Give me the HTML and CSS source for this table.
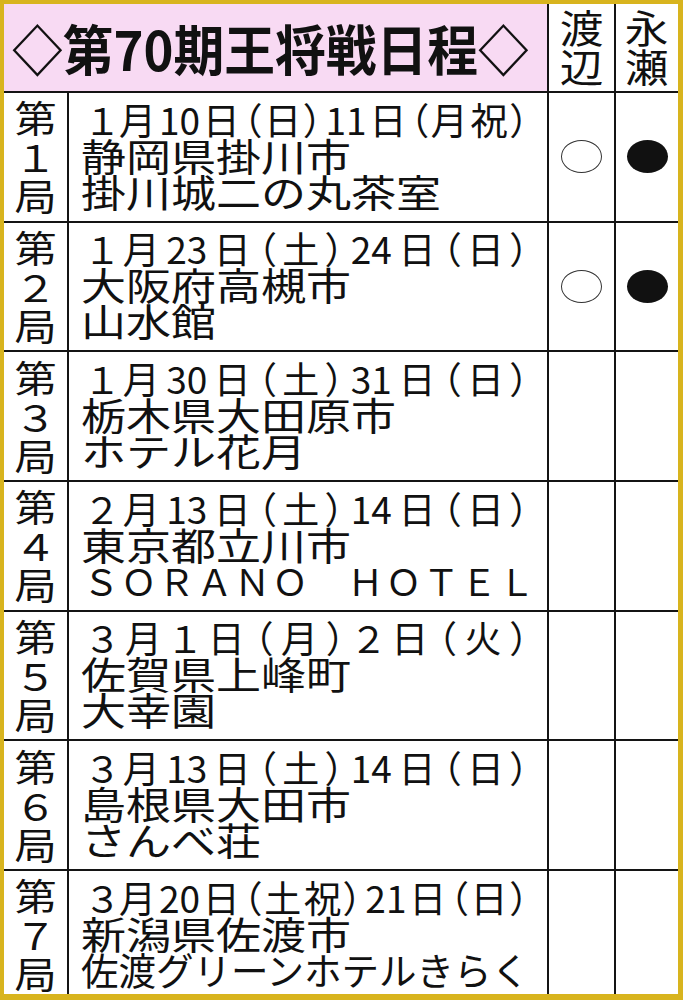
FILE: index.html
```html
<!DOCTYPE html>
<html lang="ja">
<head>
<meta charset="utf-8">
<title>第70期王将戦日程</title>
<link rel="stylesheet" href="styles.css">
</head>
<body>
<div class="frame">
  <div class="table">
    <div class="cell title"><span class="title-text">◇第70期王将戦日程◇</span></div>
    <div class="cell name"><span>渡</span><span>辺</span></div>
    <div class="cell name"><span>永</span><span>瀬</span></div>

    <div class="cell game"><span>第</span><span>１</span><span>局</span></div>
    <div class="cell info">
      <div class="date">１月10日（日）11日（月祝）</div>
      <div class="place">静岡県掛川市</div>
      <div class="place">掛川城二の丸茶室</div>
    </div>
    <div class="cell res"><span class="mark win"></span></div>
    <div class="cell res"><span class="mark loss"></span></div>

    <div class="cell game"><span>第</span><span>２</span><span>局</span></div>
    <div class="cell info">
      <div class="date">１月23日（土）24日（日）</div>
      <div class="place">大阪府高槻市</div>
      <div class="place">山水館</div>
    </div>
    <div class="cell res"><span class="mark win"></span></div>
    <div class="cell res"><span class="mark loss"></span></div>

    <div class="cell game"><span>第</span><span>３</span><span>局</span></div>
    <div class="cell info">
      <div class="date">１月30日（土）31日（日）</div>
      <div class="place">栃木県大田原市</div>
      <div class="place">ホテル花月</div>
    </div>
    <div class="cell res"></div>
    <div class="cell res"></div>

    <div class="cell game"><span>第</span><span>４</span><span>局</span></div>
    <div class="cell info">
      <div class="date">２月13日（土）14日（日）</div>
      <div class="place">東京都立川市</div>
      <div class="place spread">ＳＯＲＡＮＯ　ＨＯＴＥＬ</div>
    </div>
    <div class="cell res"></div>
    <div class="cell res"></div>

    <div class="cell game"><span>第</span><span>５</span><span>局</span></div>
    <div class="cell info">
      <div class="date">３月１日（月）２日（火）</div>
      <div class="place">佐賀県上峰町</div>
      <div class="place">大幸園</div>
    </div>
    <div class="cell res"></div>
    <div class="cell res"></div>

    <div class="cell game"><span>第</span><span>６</span><span>局</span></div>
    <div class="cell info">
      <div class="date">３月13日（土）14日（日）</div>
      <div class="place">島根県大田市</div>
      <div class="place">さんべ荘</div>
    </div>
    <div class="cell res"></div>
    <div class="cell res"></div>

    <div class="cell game"><span>第</span><span>７</span><span>局</span></div>
    <div class="cell info">
      <div class="date">３月20日（土祝）21日（日）</div>
      <div class="place">新潟県佐渡市</div>
      <div class="place fit">佐渡グリーンホテルきらく</div>
    </div>
    <div class="cell res"></div>
    <div class="cell res"></div>
  </div>
</div>
</body>
</html>
```

FILE: styles.css
```css
html, body {
  margin: 0;
  padding: 0;
  background: #ffffff;
}

body {
  font-family: "Noto Sans CJK JP", "Noto Sans", sans-serif;
  color: #111111;
}

.frame {
  width: 683px;
  height: 1000px;
  box-sizing: border-box;
  background: #d8b41e;
  padding: 4px 5px 6px 4px;
}

.table {
  height: 100%;
  overflow: hidden;
  display: grid;
  grid-template-columns: 63px 478px 65px 62px;
  grid-template-rows: 87px repeat(7, 127.67px);
  gap: 2px;
  background: #141414;
}

.cell {
  background: #ffffff;
  min-width: 0;
}

.title {
  grid-column: span 2;
  background: #f8daf3;
  display: flex;
  align-items: center;
  padding: 0 0 0 8px;
}

.title-text {
  font-size: 54px;
  font-weight: 700;
  line-height: 54px;
  white-space: nowrap;
  transform: scaleX(0.94);
  transform-origin: left center;
}

.name {
  display: flex;
  flex-direction: column;
  align-items: center;
  justify-content: center;
  padding-bottom: 4px;
  font-size: 39px;
  line-height: 39px;
}

.name span {
  display: block;
  transform: scaleX(1.12);
}

.game {
  display: flex;
  flex-direction: column;
  align-items: center;
  justify-content: center;
  font-size: 37px;
  line-height: 39px;
}

.game span {
  display: block;
  transform: scaleX(1.14);
}

.info {
  display: flex;
  flex-direction: column;
  justify-content: center;
  padding: 0 2px 4px 12px;
  line-height: 36px;
}

.date {
  font-size: 37px;
  font-feature-settings: "palt";
  text-align: justify;
  text-align-last: justify;
  text-indent: 7px;
  margin-right: 16px;
}

.place {
  font-size: 37.5px;
  white-space: nowrap;
  transform: scaleX(1.2);
  transform-origin: left center;
}

.place.fit {
  transform: none;
}

.place.spread {
  transform: none;
  font-size: 36px;
  letter-spacing: 1.8px;
  padding-left: 2px;
}

.res {
  display: flex;
  align-items: center;
  justify-content: center;
}

.mark {
  display: block;
  width: 41px;
  height: 33px;
  border-radius: 50%;
  box-sizing: border-box;
}

.mark.win {
  background: #ffffff;
  border: 1.5px solid #333333;
}

.mark.loss {
  background: #111111;
}
```
